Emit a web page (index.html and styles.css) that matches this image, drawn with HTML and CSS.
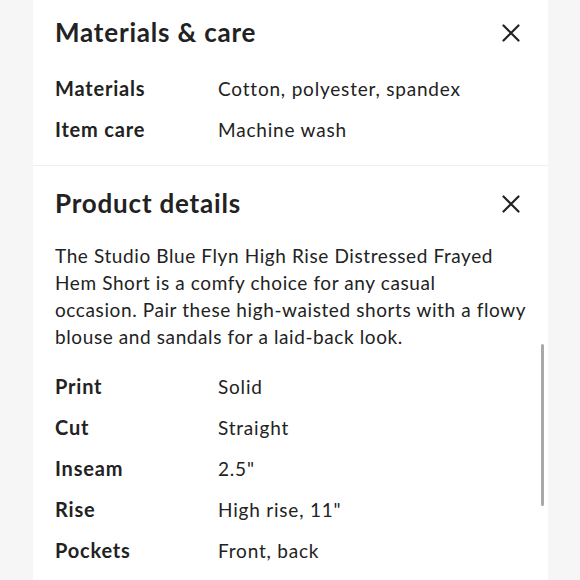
FILE: index.html
```html
<!DOCTYPE html>
<html lang="en">
<head>
<meta charset="utf-8">
<title>Product details</title>
<link rel="stylesheet" href="styles.css">
</head>
<body>
<div class="page">
  <div class="panel">
    <section class="section first">
      <div class="head">
        <h2 class="title">Materials &amp; care</h2>
        <svg class="close" viewBox="0 0 18 18" width="18" height="18" aria-hidden="true"><path d="M1.5 1.5 L16.5 16.5 M16.5 1.5 L1.5 16.5" stroke="#222" stroke-width="2.2" stroke-linecap="round" fill="none"/></svg>
      </div>
      <dl class="specs">
        <dt>Materials</dt><dd>Cotton, polyester, spandex</dd>
        <dt>Item care</dt><dd>Machine wash</dd>
      </dl>
    </section>
    <section class="section second">
      <div class="head">
        <h2 class="title">Product details</h2>
        <svg class="close" viewBox="0 0 18 18" width="18" height="18" aria-hidden="true"><path d="M1.5 1.5 L16.5 16.5 M16.5 1.5 L1.5 16.5" stroke="#222" stroke-width="2.2" stroke-linecap="round" fill="none"/></svg>
      </div>
      <p class="desc">The Studio Blue Flyn High Rise Distressed Frayed<br>Hem Short is a comfy choice for any casual<br>occasion. Pair these high-waisted shorts with a flowy<br>blouse and sandals for a laid-back look.</p>
      <dl class="specs">
        <dt>Print</dt><dd>Solid</dd>
        <dt>Cut</dt><dd>Straight</dd>
        <dt>Inseam</dt><dd>2.5"</dd>
        <dt>Rise</dt><dd>High rise, 11"</dd>
        <dt>Pockets</dt><dd>Front, back</dd>
      </dl>
    </section>
    <div class="scrollbar"></div>
  </div>
</div>
</body>
</html>
```
FILE: styles.css
```css
html, body {
  margin: 0;
  padding: 0;
}
body {
  background: #f6f6f7;
  font-family: Lato, "Open Sans", Arial, sans-serif;
  color: #222;
  width: 580px;
  height: 580px;
  overflow: hidden;
}
.page {
  padding: 0 32px 0 33px;
}
.panel {
  position: relative;
  background: #fff;
  height: 580px;
}
.section {
  padding: 0 28px 0 22px;
}
.section.first {
  padding-top: 16px;
  padding-bottom: 15px;
  border-bottom: 1px solid #efefef;
}
.section.second {
  padding-top: 21px;
}
.head {
  display: flex;
  justify-content: space-between;
  align-items: center;
  height: 32px;
}
.title {
  margin: 0;
  font-size: 26px;
  line-height: 32px;
  font-weight: 700;
  letter-spacing: 0.8px;
  color: #222;
}
.close {
  display: block;
  margin-top: 2px;
}
.specs {
  display: grid;
  grid-template-columns: 163px 1fr;
  grid-auto-rows: 41px;
  margin: 20px 0 0;
  font-size: 20px;
  line-height: 41px;
}
dt {
  font-weight: 700;
  letter-spacing: 0.8px;
}
dd {
  margin: 0;
  font-size: 19px;
  letter-spacing: 0.8px;
}
.desc {
  margin: 23px 0 0;
  font-size: 19px;
  line-height: 27px;
  letter-spacing: 0.6px;
  white-space: nowrap;
}
.second .specs {
  margin-top: 16px;
}
.scrollbar {
  position: absolute;
  left: 508px;
  top: 344px;
  width: 3px;
  height: 162px;
  border-radius: 2px;
  background: #a9a9a9;
}
```
